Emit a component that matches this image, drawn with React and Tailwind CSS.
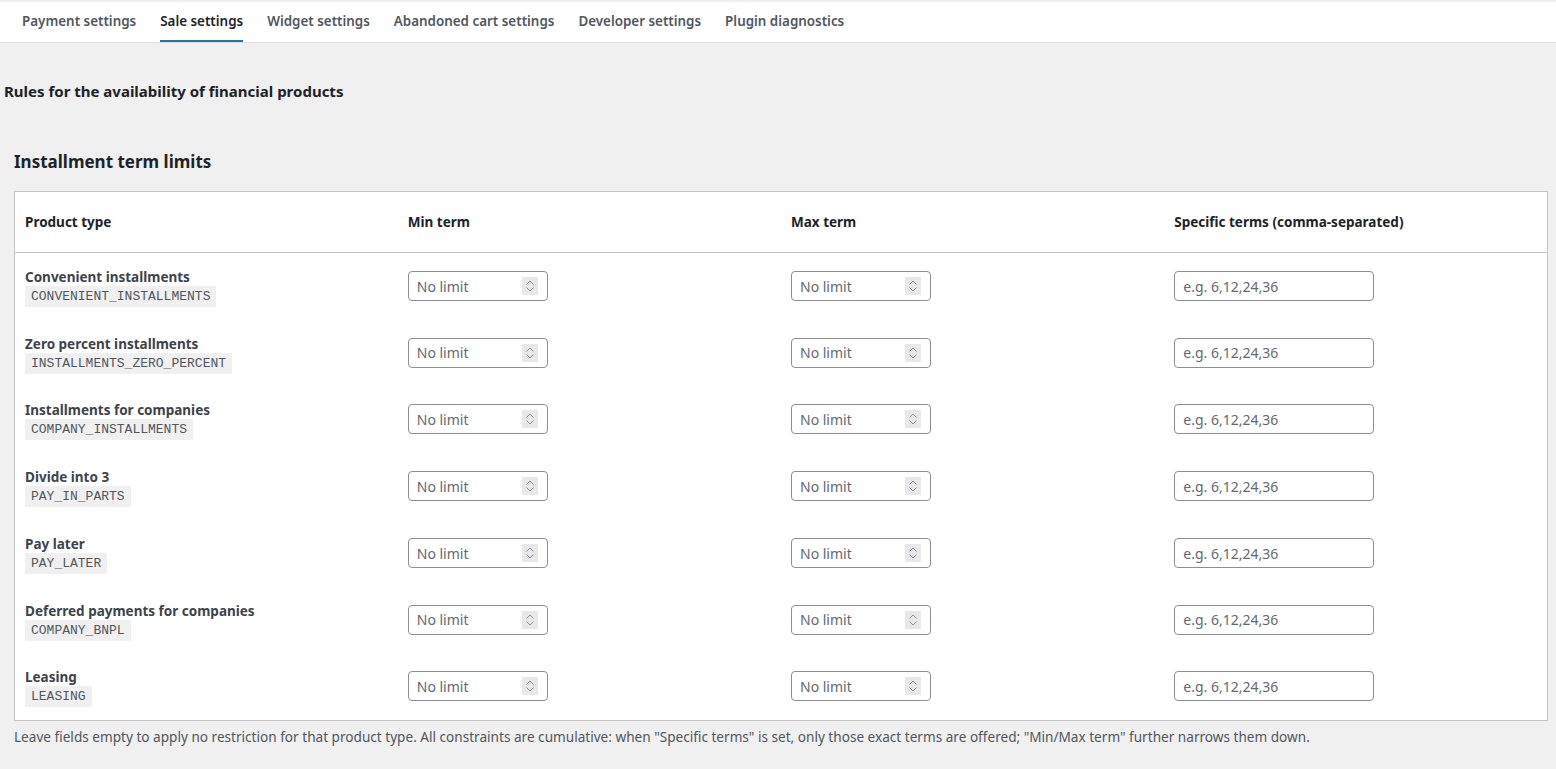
const tabs = [
  'Payment settings',
  'Sale settings',
  'Widget settings',
  'Abandoned cart settings',
  'Developer settings',
  'Plugin diagnostics',
];

const products = [
  { label: 'Convenient installments', code: 'CONVENIENT_INSTALLMENTS' },
  { label: 'Zero percent installments', code: 'INSTALLMENTS_ZERO_PERCENT' },
  { label: 'Installments for companies', code: 'COMPANY_INSTALLMENTS' },
  { label: 'Divide into 3', code: 'PAY_IN_PARTS' },
  { label: 'Pay later', code: 'PAY_LATER' },
  { label: 'Deferred payments for companies', code: 'COMPANY_BNPL' },
  { label: 'Leasing', code: 'LEASING' },
];

function NumberField() {
  return (
    <div className="relative w-[140px]">
      <input
        type="text"
        placeholder="No limit"
        className="w-full h-[30px] px-2 rounded-[4px] border border-[#8c8f94] bg-white text-sm text-[#2c3338] placeholder:text-[#646970] outline-none"
      />
      {/* spinner */}
      <span className="absolute right-[10px] top-[6px] w-[16px] h-[18px] bg-[#e8e8ea] flex flex-col items-center justify-center gap-[2px]">
        <svg width="8" height="5" viewBox="0 0 8 5" fill="none" stroke="#8c8f94" strokeWidth="1">
          <path d="M0.5 4.5 L4 1 L7.5 4.5" />
        </svg>
        <svg width="8" height="5" viewBox="0 0 8 5" fill="none" stroke="#8c8f94" strokeWidth="1">
          <path d="M0.5 0.5 L4 4 L7.5 0.5" />
        </svg>
      </span>
    </div>
  );
}

export default function App() {
  return (
    <div className="min-h-screen bg-[#f0f0f1] pt-[2px] text-[#3c434a] font-['Noto_Sans',sans-serif]">
      {/* Tabs */}
      <div className="bg-white border-b border-[#dcdcde] h-[41px] flex items-end px-[10px]">
        {tabs.map((t, i) => (
          <a
            key={t}
            className={`mx-[12px] h-full flex items-center text-[13.4px] font-semibold border-b-2 ${
              i === 1 ? 'border-[#2271b1] text-[#1d2327]' : 'border-transparent text-[#50575e]'
            }`}
          >
            {t}
          </a>
        ))}
      </div>

      <h2 className="mt-[37px] ml-[4px] text-[15px] font-bold text-[#1d2327]">
        Rules for the availability of financial products
      </h2>

      <div className="px-[14px] pr-[8px]">
        <h3 className="mt-[46px] text-[17px] font-bold text-[#1d2327]">Installment term limits</h3>

        <table className="mt-[17px] w-full bg-white border border-[#c3c4c7] table-fixed border-collapse">
          <thead>
            <tr className="h-[61px] border-b border-[#c3c4c7] text-left">
              <th className="pl-[10px] text-[13.5px] font-bold text-[#1d2327]">Product type</th>
              <th className="pl-[10px] text-[13.5px] font-bold text-[#1d2327]">Min term</th>
              <th className="pl-[10px] text-[13.5px] font-bold text-[#1d2327]">Max term</th>
              <th className="pl-[10px] text-[13.5px] font-bold text-[#1d2327]">Specific terms (comma-separated)</th>
            </tr>
          </thead>
          <tbody>
            {products.map((p) => (
              <tr key={p.code} className="h-[66.8px]">
                <td className="pl-[10px] pt-[4px] align-middle">
                  <div className="text-[13.5px] font-bold text-[#3c434a] leading-[16px]">{p.label}</div>
                  <code className="block w-fit mt-[1px] px-[6px] py-[2px] bg-[#f0f0f1] font-['Liberation_Mono',monospace] text-[13px] leading-[17px] text-[#50575e]">
                    {p.code}
                  </code>
                </td>
                <td className="pl-[10px] align-middle">
                  <NumberField />
                </td>
                <td className="pl-[10px] align-middle">
                  <NumberField />
                </td>
                <td className="pl-[10px] align-middle">
                  <input
                    type="text"
                    placeholder="e.g. 6,12,24,36"
                    className="w-[200px] h-[30px] px-2 rounded-[4px] border border-[#8c8f94] bg-white text-sm text-[#2c3338] placeholder:text-[#646970] outline-none"
                  />
                </td>
              </tr>
            ))}
          </tbody>
        </table>

        <p className="mt-[6px] text-[13.6px] text-[#50575e]">
          Leave fields empty to apply no restriction for that product type. All constraints are cumulative: when "Specific terms" is set, only those exact terms are offered; "Min/Max term" further narrows them down.
        </p>
      </div>
    </div>
  );
}
